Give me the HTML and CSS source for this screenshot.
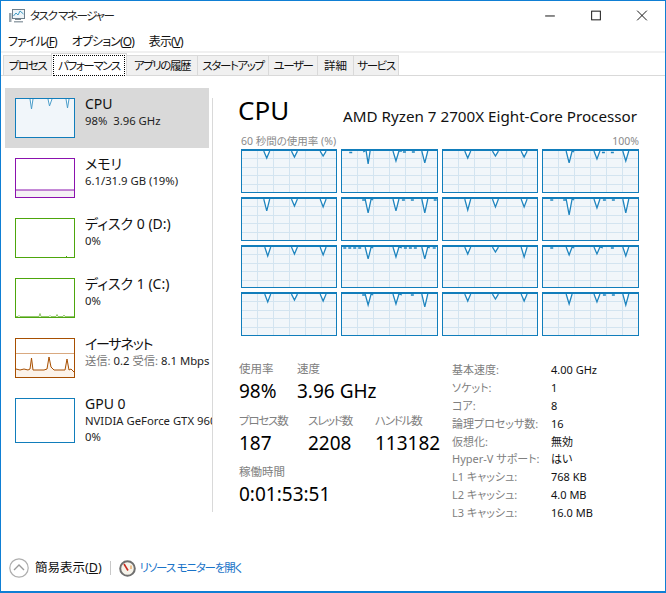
FILE: index.html
```html
<!DOCTYPE html>
<html lang="ja">
<head>
<meta charset="utf-8">
<title>タスク マネージャー</title>
<link rel="stylesheet" href="styles.css">
</head>
<body>
<div class="window">
  <header class="titlebar">
    <svg class="appicon" viewBox="0 0 16 14"><rect x="3.5" y="0.5" width="12" height="9" fill="#eef4f8" stroke="#6d7f8c"/><path d="M4.5 7 L7 4 L9 6 L11 2 L14.5 5" fill="none" stroke="#3f9bc4"/><rect x="0" y="4" width="2.5" height="9" fill="#9aa5ad"/><rect x="6" y="10" width="6" height="1" fill="#7d8890"/><rect x="5" y="12" width="9" height="1.5" fill="#9aa5ad"/></svg>
    <span class="apptitle">タスク マネージャー</span>
    <div class="controls">
      <svg class="ctl" viewBox="0 0 46 30"><path d="M18 15.5H28" stroke="#111" fill="none"/></svg>
      <svg class="ctl" viewBox="0 0 46 30"><rect x="18.5" y="10.5" width="9" height="9" stroke="#111" fill="none"/></svg>
      <svg class="ctl" viewBox="0 0 46 30"><path d="M18 10L28 20M28 10L18 20" stroke="#111" fill="none"/></svg>
    </div>
  </header>
  <nav class="menubar">
    <span class="menu">ファイル(<u>F</u>)</span>
    <span class="menu">オプション(<u>O</u>)</span>
    <span class="menu">表示(<u>V</u>)</span>
  </nav>
  <div class="tabs">
    <span class="tab t1">プロセス</span>
    <span class="tab t2 active"><span class="focus">パフォーマンス</span></span>
    <span class="tab t3">アプリの履歴</span>
    <span class="tab t4">スタートアップ</span>
    <span class="tab t5">ユーザー</span>
    <span class="tab t6">詳細</span>
    <span class="tab t7">サービス</span>
  </div>
  <main class="body">
    <aside class="side">
      <div class="item selected">
        <svg class="thumb cpu" viewBox="0 0 58 38"><path d="M14 0L15.500 10L17 0M32 0L33.500 7L36 0M50 0L51.500 9L53 0" fill="#fff" stroke="#4a9cc9"/></svg>
        <div class="info"><div class="name">CPU</div><div class="sub">98%&nbsp; 3.96 GHz</div></div>
      </div>
      <div class="item">
        <svg class="thumb mem" viewBox="0 0 58 38"><rect x="0" y="31" width="58" height="7" fill="#f4f2f4"/><path d="M0 31H58" stroke="#8b12ae"/></svg>
        <div class="info"><div class="name">メモリ</div><div class="sub">6.1/31.9 GB (19%)</div></div>
      </div>
      <div class="item">
        <svg class="thumb disk" viewBox="0 0 58 38"><path d="M50 37.500h1" stroke="#4da60c"/></svg>
        <div class="info"><div class="name">ディスク 0 (D:)</div><div class="sub">0%</div></div>
      </div>
      <div class="item">
        <svg class="thumb disk" viewBox="0 0 58 38"><path d="M0 37.500H2L3 36.500L4 37.500H23L24 34.500L25 37.500H33L34 36.500L35 37.500H40L41 35.500L42 37.500H47L48 36L49 37.500H58" fill="#e5f1db" stroke="#7ab94d" stroke-width="0.8"/></svg>
        <div class="info"><div class="name">ディスク 1 (C:)</div><div class="sub">0%</div></div>
      </div>
      <div class="item">
        <svg class="thumb net" viewBox="0 0 58 38"><path d="M0 14.500H58" stroke="#d9a980"/><path d="M0 30L4 31L8 30L12 31L14 30L15.500 19L17 31L22 31L28 31L31 30L33 18L35 28L38 31L44 31L49 31L51 20L53 31L58 33V38H0Z" fill="#fcf3ea" stroke="none"/><path d="M0 30L4 31L8 30L12 31L14 30L15.500 19L17 31L22 31L28 31L31 30L33 18L35 28L38 31L44 31L49 31L51 20L53 31L55 30L58 33" fill="none" stroke="#a74f01"/></svg>
        <div class="info"><div class="name tight">イーサネット</div><div class="sub"><span class="dim">送信:</span> 0.2 <span class="dim">受信:</span> 8.1 Mbps</div></div>
      </div>
      <div class="item">
        <div class="thumb gpu"></div>
        <div class="info"><div class="name">GPU 0</div><div class="sub">NVIDIA GeForce GTX 960</div><div class="sub">0%</div></div>
      </div>
    </aside>
    <div class="divider"></div>
    <section class="detail">
      <div class="head"><h1 class="cpu-title">CPU</h1><span class="model">AMD Ryzen 7 2700X Eight-Core Processor</span></div>
      <div class="legend"><span>60 秒間の使用率 (%)</span><span>100%</span></div>
      <div class="graphs">
        <div class="graph"><svg viewBox="0 0 95 41"><path d="M22 0L25 7L28 0M50 0L53 6L56 0M79 0L82 5L85 0"/></svg></div>
        <div class="graph"><svg viewBox="0 0 95 41"><path d="M7 1.500h3M21 1L23 0M24 0L26 13L28 0M51 0L54 10L57 0L60 0M61 1h3M70 1h3M80 0L83 12L86 0"/></svg></div>
        <div class="graph"><svg viewBox="0 0 95 41"><path d="M22 0L25 7L28 0M50 0L53 5L56 0M79 0L82 6L85 0"/></svg></div>
        <div class="graph"><svg viewBox="0 0 95 41"><path d="M23 0L26 12L29 0L31 1M51 0L54 8L57 0M59 1.500h3M68 1.500h3M80 0L83 10L86 0"/></svg></div>
        <div class="graph"><svg viewBox="0 0 95 41"><path d="M22 0L25 12L28 0M50 0L53 7L56 0M79 0L82 8L85 0"/></svg></div>
        <div class="graph"><svg viewBox="0 0 95 41"><path d="M20 1h3M23 0L26 14L29 0L31 1M51 0L54 12L57 0M60 1h3M69 1h3M80 0L83 14L86 0M92 1h3"/></svg></div>
        <div class="graph"><svg viewBox="0 0 95 41"><path d="M22 0L25 11L28 0M50 0L53 8L56 0M79 0L82 8L85 0"/></svg></div>
        <div class="graph"><svg viewBox="0 0 95 41"><path d="M7 1h3M20 1h3M23 0L26 16L29 0L31 1M51 0L54 9L57 0M60 1h3M69 1h3M80 0L83 14L86 0"/></svg></div>
        <div class="graph"><svg viewBox="0 0 95 41"><path d="M23 0L26 9L29 0M50 0L53 7L56 0M79 0L82 8L85 0"/></svg></div>
        <div class="graph"><svg viewBox="0 0 95 41"><path d="M1 1h3M6 1h3M11 1h3M16 1h3M23 0L26 12L29 0L31 1M51 0L54 10L57 0L60 1M62 1h3M67 1h3M72 1h3M80 0L83 12L86 0L88 1M91 1h3"/></svg></div>
        <div class="graph"><svg viewBox="0 0 95 41"><path d="M22 0L25 7L28 0M50 0L53 5L56 0M79 0L82 10L85 0"/></svg></div>
        <div class="graph"><svg viewBox="0 0 95 41"><path d="M7 1h3M23 0L26 8L29 0L31 1M51 0L54 7L57 0L60 1M68 1h3M80 0L83 9L86 0"/></svg></div>
        <div class="graph"><svg viewBox="0 0 95 41"><path d="M23 0L26 8L29 0M50 0L53 6L56 0M79 0L82 7L85 0"/></svg></div>
        <div class="graph"><svg viewBox="0 0 95 41"><path d="M20 1h3M23 0L26 11L29 0L31 1M51 0L54 10L57 0L60 1M69 1h3M80 0L83 13L86 0"/></svg></div>
        <div class="graph"><svg viewBox="0 0 95 41"><path d="M22 0L25 7L28 0M50 0L53 5L56 0M79 0L82 7L85 0"/></svg></div>
        <div class="graph"><svg viewBox="0 0 95 41"><path d="M23 0L26 10L29 0M51 0L54 8L57 0M60 1h3M69 1h3M80 0L83 11L86 0"/></svg></div>
      </div>
      <div class="stats">
        <div class="live">
          <div class="row">
            <div class="stat s-usage"><div class="lbl">使用率</div><div class="val">98%</div></div>
            <div class="stat"><div class="lbl">速度</div><div class="val">3.96 GHz</div></div>
          </div>
          <div class="row">
            <div class="stat s-proc"><div class="lbl tight">プロセス数</div><div class="val">187</div></div>
            <div class="stat s-thr"><div class="lbl tight">スレッド数</div><div class="val">2208</div></div>
            <div class="stat"><div class="lbl tight">ハンドル数</div><div class="val">113182</div></div>
          </div>
          <div class="row">
            <div class="stat"><div class="lbl">稼働時間</div><div class="val">0:01:53:51</div></div>
          </div>
        </div>
        <dl class="spec">
          <dt>基本速度:</dt><dd>4.00 GHz</dd>
          <dt>ソケット:</dt><dd>1</dd>
          <dt>コア:</dt><dd>8</dd>
          <dt>論理プロセッサ数:</dt><dd>16</dd>
          <dt>仮想化:</dt><dd>無効</dd>
          <dt>Hyper-V サポート:</dt><dd>はい</dd>
          <dt>L1 キャッシュ:</dt><dd>768 KB</dd>
          <dt>L2 キャッシュ:</dt><dd>4.0 MB</dd>
          <dt>L3 キャッシュ:</dt><dd>16.0 MB</dd>
        </dl>
      </div>
    </section>
  </main>
  <footer class="footer">
    <svg class="chev" viewBox="0 0 20 20"><circle cx="10" cy="10" r="9.200" fill="#fff" stroke="#aeaeae" stroke-width="1.200"/><path d="M5 12L10 7L15 12" fill="none" stroke="#9a9a9a" stroke-width="1.400"/></svg>
    <span class="fewer">簡易表示(<u>D</u>)</span>
    <span class="sep"></span>
    <svg class="gauge" viewBox="0 0 17 17"><circle cx="8.500" cy="8.500" r="7.300" fill="#f6f3ea" stroke="#6f6f6f" stroke-width="2"/><path d="M5 4L9 10.500" stroke="#c8281e" stroke-width="1.600"/><path d="M12 5.500V9" stroke="#e08a30"/></svg>
    <span class="link">リソース モニターを開く</span>
  </footer>
</div>
</body>
</html>
```

FILE: styles.css
```css
* { box-sizing: border-box; }
html, body { margin: 0; padding: 0; background: #fff; }
body {
  font-family: "Noto Sans", "Noto Sans CJK JP", sans-serif;
  font-feature-settings: "palt";
  color: #111;
  overflow: hidden;
}
.window {
  width: 666px;
  height: 593px;
  border: 1px solid #0f7fd4;
  border-bottom-width: 2px;
  display: flex;
  flex-direction: column;
  overflow: hidden;
}
.titlebar {
  height: 29px;
  flex: none;
  display: flex;
  align-items: center;
  padding-left: 8px;
}
.appicon { width: 16px; height: 14px; margin-right: 5px; }
.apptitle { font-size: 11.500px; line-height: 16px; color: #222; letter-spacing: -1.400px; }
.controls { margin-left: auto; display: flex; }
.ctl { width: 46px; height: 29px; display: block; }
.menubar {
  height: 21px;
  flex: none;
  display: flex;
  align-items: center;
  padding: 2px 0 0 7px;
  gap: 15px;
  font-size: 12px;
  letter-spacing: -0.900px;
}
.menu { line-height: 16px; }
.tabs {
  height: 25px;
  flex: none;
  display: flex;
  align-items: flex-end;
  border-top: 2px solid #f0f0f0;
  border-bottom: 1px solid #d9d9d9;
  padding-left: 2px;
  font-size: 11.500px;
  letter-spacing: -1.400px;
}
.tab {
  height: 20px;
  line-height: 19px;
  text-align: center;
  background: #f0f0f0;
  border: 1px solid #d9d9d9;
  border-bottom: 0;
  border-left: 0;
  white-space: nowrap;
}
.t1 { width: 49px; border-left: 1px solid #d9d9d9; }
.t2 { width: 75px; }
.t3 { width: 71px; }
.t4 { width: 71px; }
.t5 { width: 49px; }
.t6 { width: 36px; letter-spacing: 0; }
.t7 { width: 45px; }
.tab.active {
  height: 23px;
  width: 76px;
  margin-left: -1px;
  background: #fff;
  border-left: 1px solid #d9d9d9;
  padding: 1px;
  margin-bottom: -1px;
}
.focus {
  display: block;
  height: 21px;
  line-height: 19px;
  border: 1px dotted #000;
}
.body { flex: 1; display: flex; min-height: 0; }
.side {
  width: 211px;
  flex: none;
  overflow: hidden;
  padding: 12px 0 0 4px;
}
.item {
  width: 204px;
  height: 60px;
  display: flex;
  gap: 10px;
  padding: 10px;
  white-space: nowrap;
}
.selected { background: #d9d9d9; }
.thumb { width: 60px; height: 40px; flex: none; display: block; border: 1px solid; background: #fff; }
.cpu { border-color: #117dbb; background: #f1f6fa; }
.mem { border-color: #8b12ae; }
.disk { border-color: #4da60c; }
.net { border-color: #a74f01; }
.gpu { border-color: #117dbb; height: 45px; }
.info { margin-top: -3px; }
.name { font-size: 14px; line-height: 18px; height: 18px; }
.sub { font-size: 11.300px; line-height: 16px; color: #222; }
.dim { color: #777; }
.tight { letter-spacing: -1.200px; }
.divider { width: 1px; flex: none; background: #d9d9d9; margin: 22px 0 33px; }
.detail { flex: 1; min-width: 0; padding: 19px 26px 0 25px; }
.head { display: flex; justify-content: space-between; align-items: flex-end; height: 34px; }
.cpu-title { font-size: 26px; line-height: 34px; font-weight: 400; margin: 0 0 2px; color: #000; }
.model { font-size: 15.200px; line-height: 20px; margin: 0 2px 3px 0; color: #111; }
.legend {
  display: flex;
  justify-content: space-between;
  font-size: 10.5px;
  line-height: 14px;
  color: #8a8a8a;
  margin: 5px 0 1px 3px;
  height: 14px;
}
.graphs {
  margin-left: 3px;
  height: 187px;
  display: grid;
  grid-template-columns: 96px 97px 96px 97px;
  grid-template-rows: repeat(4, 1fr);
  gap: 4px;
}
.graph {
  border: 1px solid #117dbb;
  border-top-width: 2px;
  background-color: #f1f6fa;
  background-image:
    repeating-linear-gradient(to right, transparent 0 15px, #d3e4f0 15px 16px),
    repeating-linear-gradient(to bottom, transparent 0 7.400px, #d3e4f0 7.400px 8.400px);
  min-width: 0;
  min-height: 0;
}
.graph svg { display: block; width: 100%; height: 100%; }
.graph path { fill: #fff; stroke: #1f85bf; stroke-width: 1.300; }
.stats { display: flex; margin-top: 25px; }
.live { width: 214px; flex: none; }
.row { display: flex; height: 51px; }
.row:first-child { height: 52px; }
.stat { white-space: nowrap; margin-left: 1px; }
.s-usage { width: 57px; }
.s-proc { width: 68px; }
.s-thr { width: 66px; }
.lbl { font-size: 11.500px; line-height: 16px; color: #808080; }
.val { font-size: 19px; line-height: 26px; margin-top: 1px; color: #000; }
.spec {
  margin: 0;
  display: grid;
  grid-template-columns: 99px 1fr;
  grid-auto-rows: 17.900px;
  font-size: 11px;
  line-height: 17.900px;
  white-space: nowrap;
}
.spec dt { color: #808080; }
.spec dd { margin: 0; color: #111; }
.footer {
  height: 46px;
  flex: none;
  display: flex;
  align-items: center;
  padding: 0 0 0 8px;
}
.chev { width: 20px; height: 20px; margin-right: 6px; }
.fewer { font-size: 12.500px; line-height: 16px; }
.sep { width: 1px; height: 14px; background: #c8c8c8; margin: 0 8px; }
.gauge { width: 17px; height: 17px; margin-right: 4px; }
.link { font-size: 11.500px; line-height: 16px; color: #1a73c8; letter-spacing: -1.200px; }
```
